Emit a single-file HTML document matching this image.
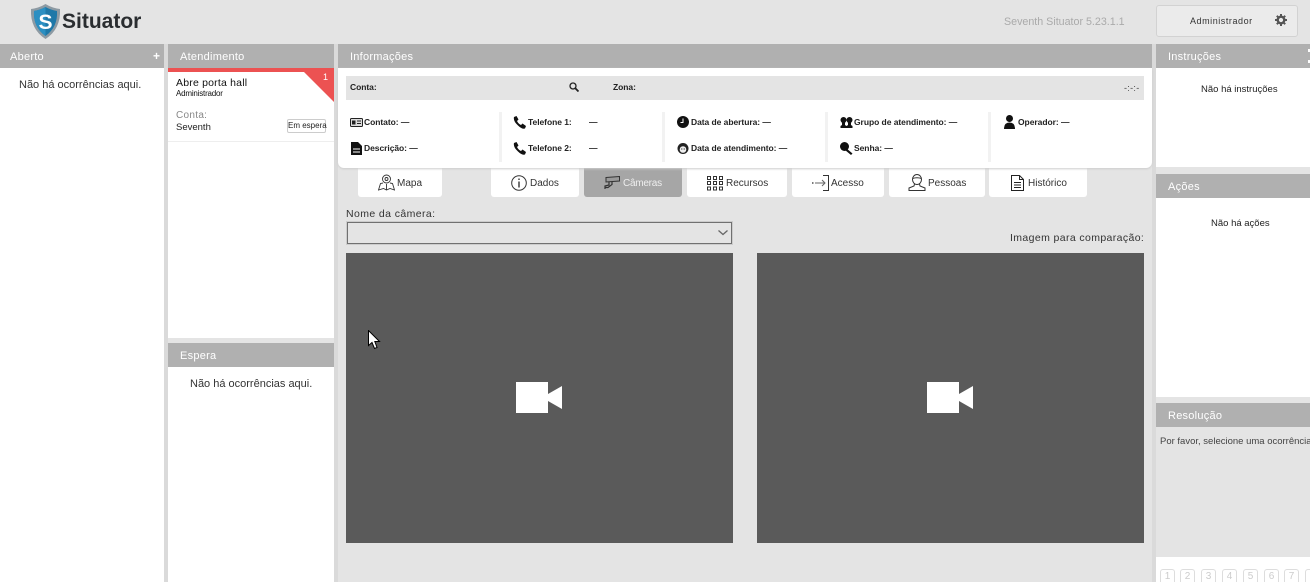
<!DOCTYPE html>
<html style="overflow:hidden;width:1310px;height:582px"><head><meta charset="utf-8">
<style>
*{box-sizing:border-box}
html,body{margin:0;padding:0}
body{width:1310px;height:582px;overflow:hidden;position:relative;background:#e4e4e4;font-family:"Liberation Sans",sans-serif;font-size:10px;color:#222}
#p{position:absolute;left:0;top:0;width:1310px;height:582px;overflow:hidden}
.a{position:absolute;white-space:nowrap}
.h{position:absolute;height:24px;background:#b0b0b0;color:#fff;font-size:11px;line-height:26px;letter-spacing:.25px}
.w{position:absolute;background:#fff}
.lbl{font-size:8.500px;font-weight:bold;color:#222;line-height:12px;letter-spacing:-.05px}
.t{position:absolute;top:168px;height:29px;background:#fff;border-radius:0 0 3px 3px}
.sep{position:absolute;top:112px;width:3px;height:50px;background:#f2f2f2}
.n{position:absolute;top:569px;width:15px;height:13px;border:1px solid #ddd;border-bottom:0;border-radius:3px 3px 0 0;color:#ccc;font-size:10px;text-align:center;line-height:14px}
.l{position:absolute;top:178px;font-size:10px;line-height:12px;color:#333}
</style></head><body><div id="p">

<!-- Logo -->
<svg class="a" style="left:30px;top:4px" width="31" height="35" viewBox="0 0 31 35">
<path d="M1 5Q9 4 15.500 0Q22 4 30 5Q31 25 15.500 35Q0 25 1 5Z" fill="#8d9aa3"/>
<path d="M4 7Q10 6 15.500 3Q21 6 27 7Q28 23 15.500 32Q3 23 4 7Z" fill="#1e78a8"/>
<path d="M4 7Q10 6 15.500 3L15.500 32Q3 23 4 7Z" fill="#2b8fc2"/>
<text x="15.500" y="25" text-anchor="middle" font-family="Liberation Sans" font-weight="bold" font-size="21" fill="#fff">S</text>
</svg>
<div class="a" style="left:62px;top:9px;font-size:21px;line-height:26px;font-weight:bold;color:#2a2d30">Situator</div>

<!-- Top right -->
<div class="a" style="left:1004px;top:16px;font-size:10.700px;line-height:13px;color:#aaa">Seventh Situator 5.23.1.1</div>
<div class="a" style="left:1156px;top:5px;width:142px;height:32px;border:1px solid #d2d2d2;border-radius:3px;background:#ebebeb"></div>
<div class="a" style="left:1190px;top:15px;font-size:9px;line-height:12px;letter-spacing:.55px;color:#333">Administrador</div>
<svg class="a" style="left:1275px;top:14px" width="12" height="12" viewBox="0 0 12 12"><circle cx="6" cy="6" r="3.300" fill="none" stroke="#555" stroke-width="2.400"/><path d="M6 0V2M6 10V12M0 6H2M10 6H12M1.800 1.800L3.200 3.200M8.800 8.800L10.200 10.200M1.800 10.200L3.200 8.800M8.800 3.200L10.200 1.800" stroke="#555" stroke-width="2"/></svg>

<!-- Aberto -->
<div class="h" style="left:0;top:44px;width:164px;padding-left:10px">Aberto</div>
<div class="a" style="left:153px;top:49px;color:#fff;font-size:12px;line-height:14px;font-weight:bold">+</div>
<div class="w" style="left:0;top:68px;width:164px;height:514px"></div>
<div class="a" style="left:19px;top:78px;font-size:11px;line-height:14px;color:#333">Não há ocorrências aqui.</div>

<!-- Atendimento -->
<div class="a" style="left:164px;top:44px;width:4px;height:538px;background:#dadada"></div>
<div class="a" style="left:334px;top:44px;width:4px;height:538px;background:#dadada"></div>
<div class="h" style="left:168px;top:44px;width:166px;padding-left:12px">Atendimento</div>
<div class="w" style="left:168px;top:68px;width:166px;height:270px"></div>
<div class="a" style="left:168px;top:68px;width:166px;height:4px;background:#ec5252"></div>
<svg class="a" style="left:304px;top:72px" width="30" height="30"><path d="M0 0H30V30Z" fill="#ec5252"/></svg>
<div class="a" style="left:323px;top:72px;color:#fff;font-size:9px;line-height:11px">1</div>
<div class="a" style="left:176px;top:77px;font-size:10.500px;line-height:12px;color:#111;letter-spacing:.2px">Abre porta hall</div>
<div class="a" style="left:176px;top:89px;font-size:8px;line-height:10px;color:#111;letter-spacing:-.2px">Administrador</div>
<div class="a" style="left:176px;top:110px;font-size:10px;line-height:12px;color:#888;letter-spacing:.3px">Conta:</div>
<div class="a" style="left:176px;top:122px;font-size:9.500px;line-height:12px;color:#222">Seventh</div>
<div class="a" style="left:287px;top:119px;width:39px;height:14px;border:1px solid #ccc;border-radius:2px;font-size:8px;line-height:12px;text-align:center;color:#222">Em espera</div>
<div class="a" style="left:168px;top:141px;width:166px;height:1px;background:#eee"></div>

<!-- Espera -->
<div class="h" style="left:168px;top:343px;width:166px;padding-left:12px">Espera</div>
<div class="w" style="left:168px;top:367px;width:166px;height:215px"></div>
<div class="a" style="left:190px;top:377px;font-size:11px;line-height:14px;color:#333">Não há ocorrências aqui.</div>

<!-- Informações -->
<div class="h" style="left:338px;top:44px;width:814px;padding-left:12px">Informações</div>
<div class="w" style="left:338px;top:68px;width:814px;height:100px;border-radius:0 0 6px 6px;box-shadow:0 1px 2px #ccc;z-index:2"></div>
<div class="a" style="left:346px;top:76px;width:798px;height:24px;background:#e4e4e4;z-index:3"></div>
<div style="position:absolute;left:0;top:0;z-index:4">
<div class="a lbl" style="left:350px;top:81px">Conta:</div>
<svg class="a" style="left:569px;top:82px" width="10" height="10" viewBox="0 0 10 10"><circle cx="4" cy="4" r="3" fill="none" stroke="#222" stroke-width="1.300"/><path d="M6.300 6.300L9.500 9.500" stroke="#222" stroke-width="1.800"/></svg>
<div class="a lbl" style="left:613px;top:81px">Zona:</div>
<div class="a" style="left:1124px;top:83px;font-size:9px;line-height:11px;color:#444;letter-spacing:.3px">-:-:-</div>

<div class="sep" style="left:499px"></div>
<div class="sep" style="left:662px"></div>
<div class="sep" style="left:825px"></div>
<div class="sep" style="left:988px"></div>

<svg class="a" style="left:350px;top:118px" width="13" height="9" viewBox="0 0 13 9"><rect x=".5" y=".5" width="12" height="8" rx="1" fill="#ddd" stroke="#222"/><rect x="2" y="2.500" width="3.500" height="4" fill="#222"/><path d="M7 3H11M7 5.500H11" stroke="#222"/></svg>
<div class="a lbl" style="left:364px;top:116px">Contato: —</div>
<svg class="a" style="left:351px;top:142px" width="11" height="13" viewBox="0 0 11 13"><path d="M0 0H7L11 4V13H0Z" fill="#111"/><path d="M2 7H9M2 10H9" stroke="#fff"/></svg>
<div class="a lbl" style="left:364px;top:142px">Descrição: —</div>

<svg class="a" style="left:513px;top:116px" width="13" height="13" viewBox="0 0 13 13"><path d="M1 1L3.500 0L5.500 3.500L4 5Q5.500 8 8 9L9.500 7.500L13 10L12 12.500Q9 13.500 5 9.500Q0 5 1 1Z" fill="#111"/></svg>
<div class="a lbl" style="left:528px;top:116px">Telefone 1:</div>
<div class="a lbl" style="left:589px;top:116px">—</div>
<svg class="a" style="left:513px;top:142px" width="13" height="13" viewBox="0 0 13 13"><path d="M1 1L3.500 0L5.500 3.500L4 5Q5.500 8 8 9L9.500 7.500L13 10L12 12.500Q9 13.500 5 9.500Q0 5 1 1Z" fill="#111"/></svg>
<div class="a lbl" style="left:528px;top:142px">Telefone 2:</div>
<div class="a lbl" style="left:589px;top:142px">—</div>

<svg class="a" style="left:677px;top:116px" width="12" height="12" viewBox="0 0 12 12"><circle cx="6" cy="6" r="6" fill="#111"/><path d="M6 2.500V6.500H3.500" stroke="#fff" fill="none"/></svg>
<div class="a lbl" style="left:691px;top:116px">Data de abertura: —</div>
<svg class="a" style="left:677px;top:142px" width="12" height="13" viewBox="0 0 12 13"><circle cx="6" cy="6.500" r="5.500" fill="#222"/><circle cx="6" cy="7.500" r="3.300" fill="#eee"/><circle cx="4.800" cy="7" r=".6" fill="#222"/><circle cx="7.200" cy="7" r=".6" fill="#222"/></svg>
<div class="a lbl" style="left:691px;top:142px">Data de atendimento: —</div>

<svg class="a" style="left:840px;top:117px" width="13" height="11" viewBox="0 0 13 11"><circle cx="3.500" cy="3" r="3" fill="#111"/><circle cx="9.500" cy="3" r="3" fill="#111"/><path d="M2 5H5V8L6.500 9V11H.5V9L2 8ZM8 5H11V8L12.500 9V11H6.500V9L8 8Z" fill="#111"/></svg>
<div class="a lbl" style="left:854px;top:116px">Grupo de atendimento: —</div>
<svg class="a" style="left:840px;top:142px" width="13" height="13" viewBox="0 0 13 13"><circle cx="4.500" cy="4.500" r="4.500" fill="#111"/><path d="M6 6L12.500 11.500L11 13L5 8Z" fill="#111"/></svg>
<div class="a lbl" style="left:854px;top:142px">Senha: —</div>

<svg class="a" style="left:1004px;top:115px" width="11" height="14" viewBox="0 0 11 14"><circle cx="5.500" cy="3.500" r="3.500" fill="#111"/><path d="M0 14Q0 7.500 5.500 7.500Q11 7.500 11 14Z" fill="#111"/></svg>
<div class="a lbl" style="left:1018px;top:116px">Operador: —</div>
</div>

<!-- Tabs -->
<div class="t" style="left:358px;width:84px"></div>
<svg class="a" style="left:378px;top:174px" width="17" height="17" viewBox="0 0 17 17" fill="none" stroke="#333" stroke-width=".9"><circle cx="8.500" cy="5" r="4"/><circle cx="8.500" cy="5" r="1.500"/><path d="M5 9L2.500 9.500L.5 16L5.500 14.500L8.500 16L12 14.500L16.500 16L14.500 9.500L12 9M8.500 10V16"/></svg>
<div class="l" style="left:397px">Mapa</div>

<div class="t" style="left:491px;width:88px"></div>
<svg class="a" style="left:511px;top:175px" width="16" height="16" viewBox="0 0 16 16" fill="none" stroke="#333"><circle cx="8" cy="8" r="7.300"/><path d="M8 6.500V12.500M8 3.500V5" stroke-width="1.400"/></svg>
<div class="l" style="left:530px">Dados</div>

<div class="t" style="left:584px;width:98px;background:#a6a6a6"></div>
<svg class="a" style="left:604px;top:176px" width="17" height="14" viewBox="0 0 17 14" fill="none" stroke="#333"><path d="M2 1.500L15.500 .5V5L2 6Z" fill="#999"/><path d="M5 6V9L1 10V13M1 11.500H4L8 8.500V5.500" stroke-width="1.200"/></svg>
<div class="l" style="left:623px;color:#eee;letter-spacing:-.25px">Câmeras</div>

<div class="t" style="left:687px;width:100px"></div>
<svg class="a" style="left:707px;top:176px" width="16" height="15" viewBox="0 0 16 15" fill="none" stroke="#333"><rect x=".5" y=".5" width="3" height="3"/><rect x="6.500" y=".5" width="3" height="3"/><rect x="12.500" y=".5" width="3" height="3"/><rect x=".5" y="5.500" width="3" height="3"/><rect x="6.500" y="5.500" width="3" height="3"/><rect x="12.500" y="5.500" width="3" height="3"/><rect x=".5" y="11" width="3" height="3"/><rect x="6.500" y="11" width="3" height="3"/><rect x="12.500" y="11" width="3" height="3"/></svg>
<div class="l" style="left:726px">Recursos</div>

<div class="t" style="left:792px;width:92px"></div>
<svg class="a" style="left:812px;top:175px" width="17" height="16" viewBox="0 0 17 16" fill="none" stroke="#333"><path d="M11 .5H16.500V15.500H11"/><path d="M0 8H1.500" stroke-width="1.300"/><path d="M3 8H13M10 5L13 8L10 11" stroke="#666"/></svg>
<div class="l" style="left:831px">Acesso</div>

<div class="t" style="left:889px;width:96px"></div>
<svg class="a" style="left:908px;top:174px" width="18" height="17" viewBox="0 0 18 17" fill="none" stroke="#333"><ellipse cx="9" cy="5.500" rx="4.500" ry="5"/><path d="M4.500 4.500Q9 3 13.500 4.500M6.500 10L6 12L1 14V16.500H17V14L12 12L11.500 10"/></svg>
<div class="l" style="left:928px">Pessoas</div>

<div class="t" style="left:989px;width:98px"></div>
<svg class="a" style="left:1011px;top:175px" width="13" height="16" viewBox="0 0 13 16" fill="none" stroke="#222"><path d="M.5 .5H8.500L12.500 4.500V15.500H.5ZM8.500 .5V4.500H12.500"/><path d="M3 7.500H10M3 10H10M3 12.500H10"/></svg>
<div class="l" style="left:1028px">Histórico</div>

<!-- Camera section -->
<div class="a" style="left:346px;top:208px;font-size:10.500px;line-height:13px;color:#333;letter-spacing:.4px">Nome da câmera:</div>
<div class="a" style="left:346px;top:221px;width:387px;height:24px;background:#e4e4e4;border:1px solid #ccc"></div>
<div class="a" style="left:347px;top:222px;width:385px;height:22px;border:1px solid #707070"></div>
<svg class="a" style="left:718px;top:230px" width="10" height="6" viewBox="0 0 10 6"><path d="M.5 .5L5 4.500L9.500 .5" fill="none" stroke="#666" stroke-width="1.300"/></svg>
<div class="a" style="left:1010px;top:232px;font-size:10.500px;line-height:13px;color:#333;letter-spacing:.38px">Imagem para comparação:</div>

<div class="a" style="left:346px;top:253px;width:387px;height:290px;background:#5a5a5a"></div>
<div class="a" style="left:757px;top:253px;width:387px;height:290px;background:#5a5a5a"></div>
<svg class="a" style="left:516px;top:382px" width="46" height="31"><path d="M0 0H32V31H0ZM32 12L46 4V27L32 19Z" fill="#fff"/></svg>
<svg class="a" style="left:927px;top:382px" width="46" height="31"><path d="M0 0H32V31H0ZM32 12L46 4V27L32 19Z" fill="#fff"/></svg>

<!-- Cursor -->
<svg class="a" style="left:368px;top:330px" width="13" height="20" viewBox="0 0 13 20"><path d="M.5 .5V15.500L4 12.500L6.500 18.500L9 17.500L6.800 11.500H11.500Z" fill="#fff" stroke="#000" stroke-width="1"/></svg>

<!-- Right column -->
<div class="a" style="left:1152px;top:44px;width:4px;height:538px;background:#dadada"></div>
<div class="h" style="left:1156px;top:44px;width:154px;padding-left:12px">Instruções</div>
<div class="a" style="left:1308px;top:49px;width:2px;height:14px;border-top:3px solid #fff;border-bottom:3px solid #fff"></div>
<div class="w" style="left:1156px;top:68px;width:154px;height:99px"></div>
<div class="a" style="left:1201px;top:84px;font-size:9.500px;line-height:12px;color:#222">Não há instruções</div>

<div class="h" style="left:1156px;top:174px;width:154px;padding-left:12px">Ações</div>
<div class="w" style="left:1156px;top:198px;width:154px;height:199px"></div>
<div class="a" style="left:1211px;top:218px;font-size:9.500px;line-height:12px;color:#222">Não há ações</div>

<div class="h" style="left:1156px;top:403px;width:154px;padding-left:12px">Resolução</div>
<div class="a" style="left:1160px;top:436px;font-size:9.500px;line-height:12px;color:#444">Por favor, selecione uma ocorrência</div>
<div class="w" style="left:1156px;top:557px;width:154px;height:25px"></div>
<div class="n" style="left:1160px">1</div>
<div class="n" style="left:1180px">2</div>
<div class="n" style="left:1201px">3</div>
<div class="n" style="left:1222px">4</div>
<div class="n" style="left:1243px">5</div>
<div class="n" style="left:1264px">6</div>
<div class="n" style="left:1284px">7</div>
<div class="n" style="left:1305px">8</div>
</div></body></html>
